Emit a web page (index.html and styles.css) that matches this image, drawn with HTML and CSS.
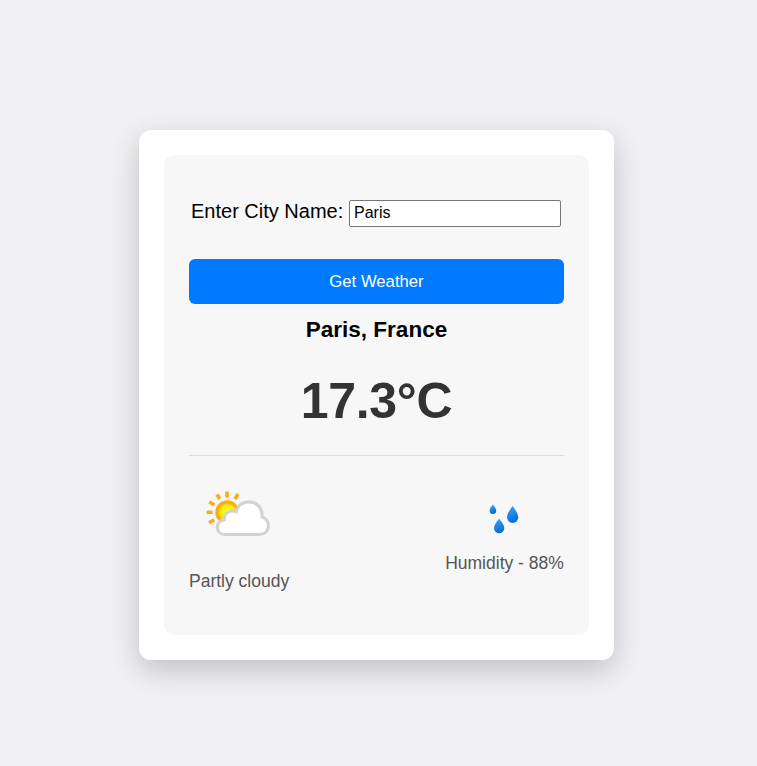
FILE: index.html
```html
<!DOCTYPE html>
<html lang="en">
<head>
<meta charset="utf-8">
<title>Weather</title>
<link rel="stylesheet" href="styles.css">
</head>
<body>
<main class="card">
  <section class="panel">
    <div class="search">
      <label for="city">Enter City Name:</label>
      <input id="city" type="text" value="Paris">
    </div>
    <button class="button" type="button">Get Weather</button>
    <h2 class="place">Paris, France</h2>
    <p class="temperature">17.3°C</p>
    <div class="details">
      <div class="condition">
        <svg class="sun-cloud" width="64" height="64" viewBox="0 0 64 64">
          <defs>
            <radialGradient id="sun"><stop offset="0" stop-color="#ffff18"/><stop offset=".6" stop-color="#fff000"/><stop offset="1" stop-color="#ffc010"/></radialGradient>
          </defs>
          <path fill="none" stroke="#fdac18" stroke-width="3.600" d="M21 8.500v6M11 11.300l2.700 4.700M32 11l-3 5.200M3.200 19l5.300 3M.6 29.300h6M3 39.700l5.300-3"/>
          <circle cx="21.300" cy="29.300" r="10.400" fill="url(#sun)" stroke="#fdab14" stroke-width="3.200"/>
          <path d="M19.500 51.500C9 51.500 8.600 38.500 18.200 36.600C17.500 30.200 24 26.200 30.200 28.500C31.500 22.500 36.500 18.800 43 18.800C51 18.800 56.800 25.500 56 33.700C65.300 37 64.500 51.500 53.500 51.500Z" fill="#fff" stroke="#d2d2d2" stroke-width="3.200"/>
        </svg>
        <p>Partly cloudy</p>
      </div>
      <div class="humidity">
        <svg class="drops" width="30" height="30" viewBox="0 0 30 30">
          <defs><linearGradient id="drop" x2=".3" y2="1"><stop offset="0" stop-color="#37a6ee"/><stop offset="1" stop-color="#0870d8"/></linearGradient></defs>
          <g fill="url(#drop)"><path d="M3.900.5Q.6 4.600.6 6.800a3.300 3.300 0 0 0 6.600 0Q7.200 4.600 3.900.5Z"/><path d="M23.600 2Q18 9.500 18 13.300a5.650 5.650 0 0 0 11.300 0Q29.300 9.500 23.600 2Z"/><path d="M10.100 14.800Q5 20.800 5 24a5.150 5.150 0 0 0 10.300 0Q15.300 20.800 10.100 14.800Z"/></g>
        </svg>
        <p>Humidity - 88%</p>
      </div>
    </div>
  </section>
</main>
</body>
</html>
```
FILE: styles.css
```css
* { box-sizing: border-box; }
body { min-height: 100vh; margin: 0; padding: 130px 0 0 139px; background: #f0f0f5; font-family: "Liberation Sans", Arial, sans-serif; }
.card { width: 475px; height: 530px; padding: 25px; border-radius: 12px; background: #fff; box-shadow: 0 10px 30px rgba(0,0,0,.2); }
.panel { height: 480px; padding: 45px 25px 0; border-radius: 10px; background: #f7f7f7; text-align: center; }
.search { display: flex; height: 27px; padding-left: 2px; gap: 6px; font-size: 20px; line-height: 23px; white-space: nowrap; }
.search label { width: 152px; }
.search input { width: 212px; height: 27px; margin: 0; padding: 1px 4px 3px; border: 1px solid #767676; border-radius: 2px; font: 16px/20px "Liberation Sans", Arial, sans-serif; color: #000; background: #fff; }
.button { display: block; width: 375px; height: 45px; margin: 32px 0 0; padding: 0; border: 0; border-radius: 6px; background: #007bff; color: #fff; font: 16.7px "Liberation Sans", Arial, sans-serif; }
.place { margin: 13px 0 0; font-size: 22.5px; line-height: 26px; }
.temperature { margin: 30px 0 0; height: 82px; font-size: 50px; line-height: 57px; font-weight: bold; letter-spacing: -.3px; color: #333; }
.details { display: flex; justify-content: space-between; align-items: flex-start; padding-top: 27px; border-top: 1px solid #ddd; }
.details p { margin: 0; font-size: 17.5px; line-height: 20px; color: #555; white-space: nowrap; }
.condition { width: 100px; }
.humidity { width: 119px; }
.sun-cloud { display: block; margin: 0 0 24px 17px; }
.drops { display: block; margin: 21px 0 19px 44px; }
```
